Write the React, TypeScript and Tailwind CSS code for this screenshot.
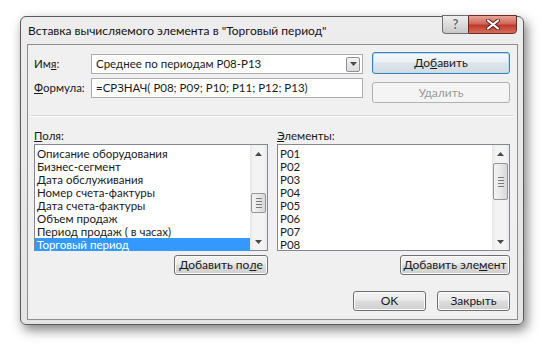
import type { ReactNode } from 'react';

const fields = [
  'Описание оборудования',
  'Бизнес-сегмент',
  'Дата обслуживания',
  'Номер счета-фактуры',
  'Дата счета-фактуры',
  'Объем продаж',
  'Период продаж ( в часах)',
  'Торговый период',
];

const items = ['P01', 'P02', 'P03', 'P04', 'P05', 'P06', 'P07', 'P08'];

function Btn({ children, className, def, disabled }: { children: ReactNode; className: string; def?: boolean; disabled?: boolean }) {
  let look =
    'border-[#707070] bg-[linear-gradient(#f2f2f2,#ebebeb_45%,#dddddd_50%,#cfcfcf)] text-[#1a1a1a] shadow-[inset_0_0_0_1px_#fbfbfb]';
  if (def)
    look =
      'border-[#3c7fb1] bg-[linear-gradient(#f4f8fb,#eaf0f4_45%,#dde5ea_50%,#d2dde4)] text-[#1a1a1a] shadow-[inset_0_0_0_1px_#b8dcf2]';
  if (disabled) look = 'border-[#adb2b5] bg-[#f4f4f4] text-[#9a9a9a]';
  return (
    <div className={`flex items-center justify-center rounded-[3px] border text-[12px] ${look} ${className}`}>
      {children}
    </div>
  );
}

function Arrow({ up }: { up?: boolean }) {
  return (
    <svg width="7" height="4" viewBox="0 0 7 4">
      <path d={up ? 'M0 4 L3.5 0 L7 4 Z' : 'M0 0 L3.5 4 L7 0 Z'} fill="#4a4a4a" />
    </svg>
  );
}

function ScrollBar({ thumbTop, thumbH }: { thumbTop: string; thumbH: string }) {
  return (
    <div className="flex w-[17px] flex-col bg-[linear-gradient(90deg,#e6e6e6,#f3f3f3_20%,#f3f3f3_80%,#e9e9e9)]">
      <div className="flex h-[17px] items-center justify-center">
        <Arrow up />
      </div>
      <div className="flex flex-1 flex-col items-center">
        <div
          className={`flex w-[15px] flex-col items-center justify-center gap-[2px] rounded-[2px] border border-[#959595] bg-[linear-gradient(90deg,#f3f3f3,#e8e8e8_50%,#d6d6d6)] ${thumbTop} ${thumbH}`}
        >
          <div className="h-px w-[6px] bg-[#7a7a7a]" />
          <div className="h-px w-[6px] bg-[#7a7a7a]" />
          <div className="h-px w-[6px] bg-[#7a7a7a]" />
          <div className="h-px w-[6px] bg-[#7a7a7a]" />
        </div>
      </div>
      <div className="flex h-[17px] items-center justify-center">
        <Arrow />
      </div>
    </div>
  );
}

export default function App() {
  return (
    <div className="h-[348px] w-[545px] bg-white pl-[20px] pt-[16px] font-['Lato','Liberation_Sans',Arial,sans-serif] text-[#1a1a1a]">
      {/* Window */}
      <div className="flex h-[309px] w-[504px] flex-col rounded-[6px] border border-[#5a5a5a] bg-[linear-gradient(#ededed,#e4e4e4)] shadow-[3px_5px_12px_rgba(0,0,0,0.5)]">
        {/* Title bar */}
        <div className="flex h-[27px] items-start pl-[7px]">
          <div className="flex-1 pt-[6px] text-[12px] leading-[16px] text-[#111]">
            Вставка вычисляемого элемента в "Торговый период"
          </div>
          <div className="mr-[6px] mt-[-2px] flex">
            <div className="flex h-[19px] w-[26px] items-center justify-center rounded-bl-[4px] border border-r-0 border-[#6f6f6f] bg-[linear-gradient(#eeeeee,#dcdcdc_50%,#c8c8c8)] text-[13px] font-bold leading-none text-[#6a6a6a] [text-shadow:0_0_2px_#fff]">
              ?
            </div>
            <div className="flex h-[19px] w-[49px] items-center justify-center rounded-br-[4px] border border-[#6f2a22] bg-[linear-gradient(#e8a496,#d0685a_45%,#c0392b_55%,#d4705f)]">
              <svg width="14" height="11" viewBox="0 0 14 11">
                <path d="M2 1.5 L12 9.5 M12 1.5 L2 9.5" stroke="#5a1f18" strokeWidth="4" strokeLinecap="round" />
                <path d="M2 1.5 L12 9.5 M12 1.5 L2 9.5" stroke="#ffffff" strokeWidth="2.2" strokeLinecap="round" />
              </svg>
            </div>
          </div>
        </div>

        {/* Client area */}
        <div className="ml-[6px] flex h-[276px] w-[491px] flex-col border border-[#8e8e8e] bg-[#f0f0f0] pb-[8px] pl-[6px] pr-[7px] pt-[7px] text-[11.5px]">
          {/* Name / formula */}
          <div className="flex items-start">
            <div className="mt-[2px] flex flex-col gap-[4px]">
              <div className="flex h-[20px] items-center">
                <div className="w-[57px]">
                  Им<span className="underline">я</span>:
                </div>
                <div className="flex h-[20px] w-[272px] items-center border border-[#abadb3] bg-white pl-[4px] pr-[2px]">
                  <div className="flex-1">Среднее по периодам P08-P13</div>
                  <div className="flex h-[15px] w-[14px] items-center justify-center rounded-[2px] border border-[#8f8f8f] bg-[linear-gradient(#f3f3f3,#dcdcdc)]">
                    <Arrow />
                  </div>
                </div>
              </div>
              <div className="flex h-[20px] items-center">
                <div className="w-[57px]">
                  <span className="underline">Ф</span>ормула:
                </div>
                <div className="flex h-[20px] w-[272px] items-center border border-[#abadb3] bg-white pl-[4px]">
                  =СРЗНАЧ( P08; P09; P10; P11; P12; P13)
                </div>
              </div>
            </div>
            <div className="ml-[9px] flex flex-col gap-[8px]">
              <Btn def className="h-[22px] w-[138px]">
                До<span className="underline">б</span>авить
              </Btn>
              <Btn disabled className="h-[21px] w-[138px]">
                Удалить
              </Btn>
            </div>
          </div>

          {/* Separator */}
          <div className="-mx-[3px] mt-[12px] h-[2px] border-b border-t border-b-white border-t-[#d5d5d5]" />

          {/* Lists */}
          <div className="mt-[11px] flex gap-[9px]">
            <div className="flex w-[234px] flex-col">
              <div className="leading-[15px]">
                <span className="underline">П</span>оля:
              </div>
              <div className="mt-[1px] flex h-[107px] border border-[#828790] bg-white">
                <div className="flex-1 pt-[2px] leading-[13px]">
                  {fields.map((f, i) => (
                    <div key={f} className={i === fields.length - 1 ? 'bg-[#3399ff] pl-[2px] text-white' : 'pl-[2px]'}>
                      {f}
                    </div>
                  ))}
                </div>
                <ScrollBar thumbTop="mt-[31px]" thumbH="h-[20px]" />
              </div>
              <div className="mt-[4px] flex justify-end">
                <Btn className="h-[20px] w-[94px]">
                  Добавить по<span className="underline">л</span>е
                </Btn>
              </div>
            </div>
            <div className="flex w-[233px] flex-col">
              <div className="leading-[15px]">
                <span className="underline">Э</span>лементы:
              </div>
              <div className="mt-[1px] flex h-[107px] border border-[#828790] bg-white">
                <div className="flex-1 pt-[2px] leading-[13px]">
                  {items.map((p) => (
                    <div key={p} className="pl-[2px]">
                      {p}
                    </div>
                  ))}
                </div>
                <ScrollBar thumbTop="mt-[1px]" thumbH="h-[37px]" />
              </div>
              <div className="mt-[4px] flex justify-end">
                <Btn className="h-[20px] w-[110px]">
                  Добавить эле<span className="underline">м</span>ент
                </Btn>
              </div>
            </div>
          </div>

          {/* Bottom buttons */}
          <div className="mt-auto flex justify-end gap-[11px]">
            <Btn className="h-[20px] w-[73px]">OK</Btn>
            <Btn className="h-[20px] w-[73px]">Закрыть</Btn>
          </div>
        </div>
      </div>
    </div>
  );
}
